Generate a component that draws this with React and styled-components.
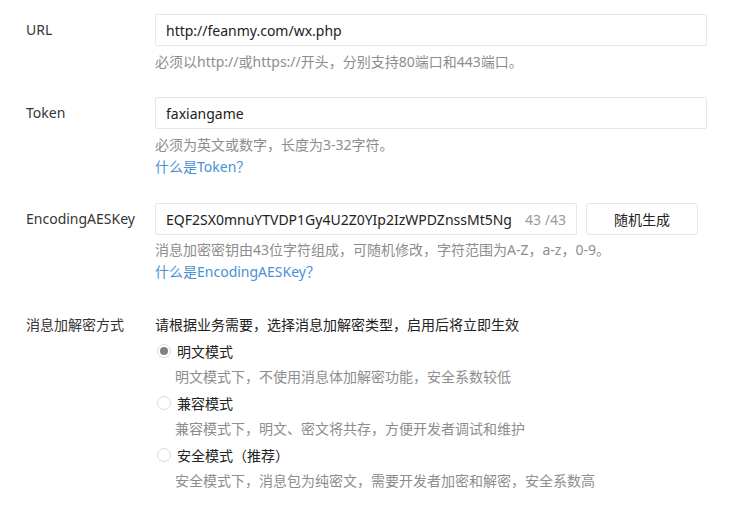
import React from "react";
import styled, { createGlobalStyle } from "styled-components";

const Global = createGlobalStyle`
  html, body { margin: 0; padding: 0; background: #fff; }
  body {
    font-family: "Noto Sans", "Noto Sans CJK SC", sans-serif;
    font-size: 14px;
    color: #353535;
  }
`;

const Page = styled.div`
  padding: 14px 0 0 26px;
  width: 716px;
`;

const Row = styled.div`
  display: grid;
  grid-template-columns: 129px 1fr;
  margin-bottom: ${(p) => p.$gap || 0}px;
`;

const Label = styled.div`
  line-height: ${(p) => p.$lh || 32}px;
  color: #353535;
  white-space: nowrap;
`;

const Field = styled.div`
  display: flex;
  flex-direction: column;
`;

const InputLine = styled.div`
  display: flex;
  gap: 9px;
`;

const Input = styled.div`
  box-sizing: border-box;
  width: ${(p) => p.$w}px;
  height: 32px;
  border: 1px solid #e7e7eb;
  border-radius: 2px;
  padding: 0 10px;
  display: flex;
  align-items: center;
  color: #222;
  font-size: 14px;
  overflow: hidden;
`;

const InputText = styled.span`
  flex: 1;
  overflow: hidden;
  white-space: nowrap;
`;

const Counter = styled.span`
  color: #9a9a9a;
  padding-left: 6px;
  white-space: nowrap;
`;

const Button = styled.div`
  box-sizing: border-box;
  width: 112px;
  height: 32px;
  border: 1px solid #e4e8eb;
  border-radius: 3px;
  display: flex;
  align-items: center;
  justify-content: center;
  color: #222;
  background: #fff;
`;

const Hint = styled.div`
  color: #8d8d8d;
  line-height: 22px;
  margin-top: ${(p) => p.$mt || 0}px;
  white-space: nowrap;
`;

const Link = styled.a`
  color: #4a8fd8;
  line-height: 22px;
  text-decoration: none;
  display: block;
`;

const Desc = styled.div`
  color: #222;
  line-height: 26px;
`;

const RadioItem = styled.div`
  display: flex;
  align-items: center;
  height: 26px;
  color: #222;
`;

const Circle = styled.span`
  box-sizing: border-box;
  width: 14px;
  height: 14px;
  border-radius: 50%;
  border: 1px solid #dcdde0;
  margin: 0 6px 0 2px;
  display: flex;
  align-items: center;
  justify-content: center;
  &::after {
    content: "";
    display: ${(p) => (p.$on ? "block" : "none")};
    width: 8px;
    height: 8px;
    border-radius: 50%;
    background: #808080;
  }
`;

const RadioDesc = styled.div`
  color: #8d8d8d;
  line-height: 26px;
  padding-left: 20px;
`;

const modes = [
  { name: "明文模式", desc: "明文模式下，不使用消息体加解密功能，安全系数较低", on: true },
  { name: "兼容模式", desc: "兼容模式下，明文、密文将共存，方便开发者调试和维护" },
  { name: "安全模式（推荐）", desc: "安全模式下，消息包为纯密文，需要开发者加密和解密，安全系数高" },
];

export default function App() {
  return (
    <>
      <Global />
      <Page>
        <Row $gap={24}>
          <Label>URL</Label>
          <Field>
            <Input $w={552}>
              <InputText>http://feanmy.com/wx.php</InputText>
            </Input>
            <Hint $mt={5}>必须以http://或https://开头，分别支持80端口和443端口。</Hint>
          </Field>
        </Row>
        <Row $gap={25}>
          <Label>Token</Label>
          <Field>
            <Input $w={552}>
              <InputText>faxiangame</InputText>
            </Input>
            <Hint $mt={5}>必须为英文或数字，长度为3-32字符。</Hint>
            <Link href="#">什么是Token？</Link>
          </Field>
        </Row>
        <Row $gap={29}>
          <Label>EncodingAESKey</Label>
          <Field>
            <InputLine>
              <Input $w={422}>
                <InputText>EQF2SX0mnuYTVDP1Gy4U2Z0YIp2IzWPDZnssMt5Ng</InputText>
                <Counter>43 /43</Counter>
              </Input>
              <Button>随机生成</Button>
            </InputLine>
            <Hint $mt={4}>消息加密密钥由43位字符组成，可随机修改，字符范围为A-Z，a-z，0-9。</Hint>
            <Link href="#">什么是EncodingAESKey？</Link>
          </Field>
        </Row>
        <Row>
          <Label $lh={26}>消息加解密方式</Label>
          <Field>
            <Desc>请根据业务需要，选择消息加解密类型，启用后将立即生效</Desc>
            {modes.map((m) => (
              <React.Fragment key={m.name}>
                <RadioItem>
                  <Circle $on={m.on} />
                  {m.name}
                </RadioItem>
                <RadioDesc>{m.desc}</RadioDesc>
              </React.Fragment>
            ))}
          </Field>
        </Row>
      </Page>
    </>
  );
}
